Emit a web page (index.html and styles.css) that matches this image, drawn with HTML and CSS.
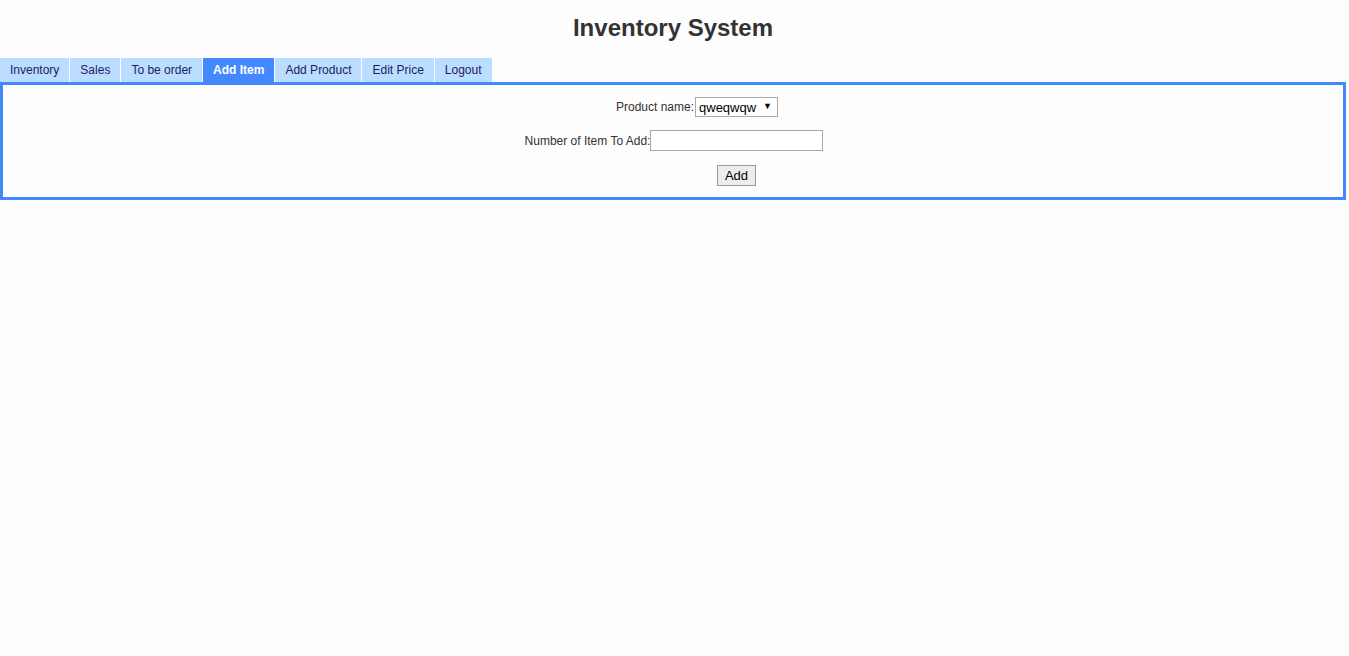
FILE: index.html
```html
<!DOCTYPE html>
<html>
<head>
<meta charset="utf-8">
<title>Inventory System</title>
<link rel="stylesheet" href="styles.css">
</head>
<body>
<h1 class="title">Inventory System</h1>
<nav class="tabs">
  <a class="tab" href="#">Inventory</a>
  <a class="tab" href="#">Sales</a>
  <a class="tab" href="#">To be order</a>
  <a class="tab active" href="#">Add Item</a>
  <a class="tab" href="#">Add Product</a>
  <a class="tab" href="#">Edit Price</a>
  <a class="tab" href="#">Logout</a>
</nav>
<div class="panel">
  <form class="form">
    <div class="row row-product">
      <label class="label">Product name:</label>
      <span class="select-wrap">
        <select class="select"><option>qweqwqw</option></select>
      </span>
    </div>
    <div class="row row-number">
      <label class="label">Number of Item To Add:</label>
      <input class="input" type="text">
    </div>
    <div class="row row-button">
      <button class="button" type="button">Add</button>
    </div>
  </form>
</div>
</body>
</html>
```
FILE: styles.css
```css
html, body {
  margin: 0;
  padding: 0;
  background: #fdfdfd;
  font-family: "Liberation Sans", Arial, sans-serif;
  color: #333;
}

.title {
  margin: 0;
  padding-top: 14px;
  line-height: 28px;
  height: 44px;
  font-size: 24px;
  font-weight: bold;
  text-align: center;
  color: #333;
  padding-right: 3px;
}

.tabs {
  display: flex;
  gap: 1px;
  height: 24px;
}

.tab {
  display: block;
  padding: 0 10px;
  line-height: 24px;
  font-size: 12px;
  background: #bbddff;
  color: #1c1c66;
  text-decoration: none;
}

.tab.active {
  background: #4488ff;
  color: #fff;
  font-weight: bold;
}

.panel {
  width: 1340px;
  border: 3px solid #4488ff;
  height: 112px;
}

.form {
  display: flex;
  flex-direction: column;
  align-items: center;
  padding-top: 12px;
}

.row {
  display: flex;
  align-items: center;
  font-size: 12px;
}

.row-product {
  height: 20px;
  margin-left: 48px;
}

.row-number {
  height: 21px;
  margin-top: 13px;
  margin-left: 2px;
}

.row-button {
  height: 21px;
  margin-top: 14px;
  margin-left: 127px;
}

.label {
  color: #333;
}

.select-wrap {
  position: relative;
  display: inline-block;
  margin-left: 1px;
}

.select-wrap::after {
  content: "\25BC";
  position: absolute;
  right: 6px;
  top: 4px;
  font-size: 9px;
  color: #000;
  pointer-events: none;
}

.select {
  -webkit-appearance: none;
  appearance: none;
  width: 83px;
  height: 20px;
  box-sizing: border-box;
  border: 1px solid #a9a9a9;
  background: #fff;
  font-family: "Liberation Sans", Arial, sans-serif;
  font-size: 13px;
  color: #000;
  padding: 0 0 0 3px;
  margin: 0;
}

.input {
  width: 173px;
  height: 21px;
  box-sizing: border-box;
  border: 1px solid #a9a9a9;
  background: #fff;
  margin: 0;
  padding: 0 2px;
}

.button {
  width: 39px;
  height: 21px;
  box-sizing: border-box;
  border: 1px solid #999;
  background: #ededed;
  font-family: "Liberation Sans", Arial, sans-serif;
  font-size: 13px;
  color: #000;
  padding: 0;
  margin: 0;
}
```
